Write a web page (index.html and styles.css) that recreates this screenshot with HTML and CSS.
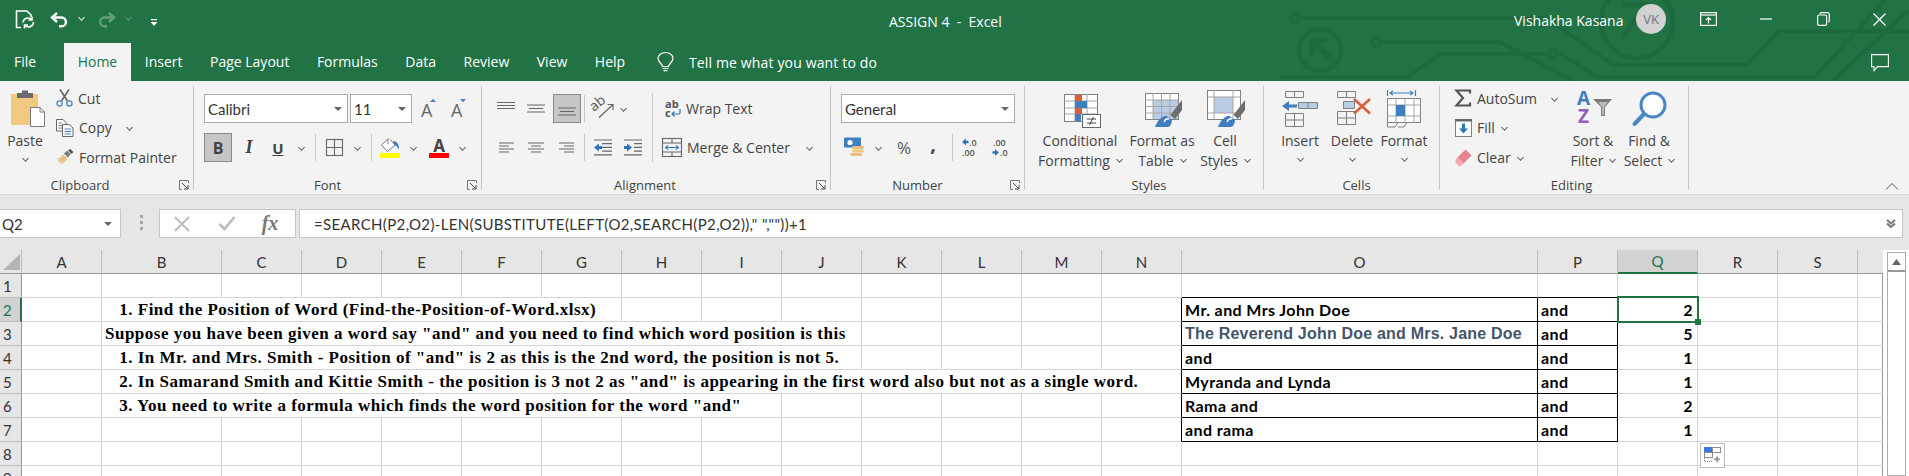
FILE: index.html
```html
<!DOCTYPE html>
<html>
<head lang="en">
    <meta charset="UTF-8">
    <title>ASSIGN 4 - Excel</title>
    <link rel="stylesheet" href="styles.css">
</head>
<body>
<div class="app">

    <header class="titlebar">
        <svg class="circuit" width="629" height="81" viewBox="0 0 629 81" fill="none" stroke="#1d6a3f" stroke-width="4">
            <circle cx="15" cy="18" r="4"/>
            <path d="M19 18H267L333 65H467L499 31H629"/>
            <circle cx="96" cy="42" r="4.5"/>
            <path d="M101 42H220L293 81"/>
            <path d="M0 77H128L160 54H269"/>
            <circle cx="273" cy="54" r="4"/>
            <path d="M277 54H281L317 77H535L605 0"/>
            <path d="M551 82L629 10"/>
            <circle cx="40" cy="50" r="21" stroke-width="5"/>
            <path d="M47 40H32V55M33 41L52 60" stroke-width="5"/>
            <circle cx="357" cy="22" r="36" stroke-width="5"/>
            <path d="M341 5H366L343 37" stroke-width="5"/>
        </svg>

        <div class="top-row">
            <div class="qat">
                <svg class="qat-save" width="20" height="19" viewBox="0 0 20 19" fill="none" stroke="#fff" stroke-width="1.6">
                    <path d="M6 17.5H1.5V1H12L16 5V7"/>
                    <path d="M8 12.5a5 5 0 0 1 8.5-3M18.5 12a5 5 0 0 1-8.5 3.5"/>
                    <path d="M17 6.5V10H13.5M9.5 18.5V15H13"/>
                </svg>
                <svg class="qat-undo" width="19" height="16" viewBox="0 0 19 16" fill="none" stroke="#fff" stroke-width="2.4">
                    <path d="M7 1L2 5.5L7 10"/>
                    <path d="M3 5.5H11.5a4.2 4.2 0 0 1 0 8.8H9"/>
                </svg>
                <span class="chev chev-white qat-chev-a"></span>
                <svg class="qat-redo" width="19" height="16" viewBox="0 0 19 16" fill="none" stroke="#fff" stroke-width="2.4">
                    <path d="M12 1L17 5.5L12 10"/>
                    <path d="M16 5.5H7.5a4.2 4.2 0 0 0 0 8.8H10"/>
                </svg>
                <span class="chev chev-white chev-dim qat-chev-b"></span>
                <svg class="qat-more" width="8" height="8" viewBox="0 0 8 8" fill="#fff">
                    <path d="M1 0H7V1.2H1zM0.5 3H7.5L4 7z"/>
                </svg>
            </div>
            <div class="doc-title">ASSIGN 4&nbsp; -&nbsp; Excel</div>
            <div class="user-name">Vishakha Kasana</div>
            <div class="avatar">VK</div>
            <div class="win-btn">
                <svg width="17" height="14" viewBox="0 0 17 14" fill="none" stroke="#fff" stroke-width="1.2">
                    <rect x="0.6" y="0.6" width="15.8" height="12.8"/>
                    <path d="M0.6 3H16.4"/>
                    <path d="M8.5 11.5V5.5M6 8L8.5 5.5L11 8"/>
                </svg>
            </div>
            <div class="win-btn">
                <svg width="12" height="2" viewBox="0 0 12 2"><path d="M0 1H12" stroke="#fff" stroke-width="1.2"/></svg>
            </div>
            <div class="win-btn">
                <svg width="13" height="14" viewBox="0 0 13 14" fill="none" stroke="#fff" stroke-width="1.2">
                    <rect x="0.6" y="3" width="9" height="10.4" rx="1.5"/>
                    <path d="M3 1.8a1.5 1.5 0 0 1 1.3-1.2h6a1.8 1.8 0 0 1 2 2v6a1.5 1.5 0 0 1-1.2 1.4"/>
                </svg>
            </div>
            <div class="win-btn">
                <svg width="13" height="13" viewBox="0 0 13 13" stroke="#fff" stroke-width="1.3"><path d="M0.5 0.5L12.5 12.5M12.5 0.5L0.5 12.5"/></svg>
            </div>
        </div>

        <nav class="tab-row">
            <div class="tab tab-file">File</div>
            <div class="tab tab-active">Home</div>
            <div class="tab">Insert</div>
            <div class="tab">Page Layout</div>
            <div class="tab">Formulas</div>
            <div class="tab">Data</div>
            <div class="tab">Review</div>
            <div class="tab">View</div>
            <div class="tab">Help</div>
            <svg class="bulb" width="17" height="20" viewBox="0 0 17 20" fill="none" stroke="#fff" stroke-width="1.2">
                <path d="M5.5 14.5C5 11.5 1 10 1 6.5a7.5 6 0 0 1 15 0C16 10 12 11.5 11.5 14.5Z"/>
                <path d="M5.5 16.5H11.5M6.5 18.7H10.5"/>
            </svg>
            <div class="tell-me">Tell me what you want to do</div>
            <svg class="comment" width="18" height="18" viewBox="0 0 18 18" fill="none" stroke="#fff" stroke-width="1.1">
                <path d="M0.6 0.6H17.4V12.6H6.5L3 16.5V12.6H0.6Z"/>
            </svg>
        </nav>
    </header>

    <section class="ribbon">

        <div class="group group-clipboard">
            <div class="group-body clip-body">
                <div class="big-btn big-paste">
                    <svg class="big-icon" width="50" height="42" viewBox="0 0 50 42">
                        <rect x="11" y="8" width="27" height="31" rx="1" fill="#f1c981"/>
                        <path d="M22 7V4.5h6V7h5v5H17V7Z" fill="#6b6b6b"/>
                        <path d="M30.5 21.5H40L44.5 26V40.5H30.5Z" fill="#fff" stroke="#7a7a7a"/>
                        <path d="M40 21.5V26H44.5" fill="none" stroke="#7a7a7a"/>
                    </svg>
                    <div class="big-text">Paste</div>
                    <div class="big-text"><span class="chev chev-up"></span></div>
                </div>
                <div class="small-list">
                    <div class="small-row">
                        <svg class="small-icon" width="17" height="18" viewBox="0 0 17 18" fill="none">
                            <path d="M4 0.5L11.5 12M13 0.5L5.5 12" stroke="#666" stroke-width="1.6"/>
                            <circle cx="3.6" cy="14.4" r="2.6" stroke="#4a86c5" stroke-width="1.3"/>
                            <circle cx="13.4" cy="14.4" r="2.6" stroke="#4a86c5" stroke-width="1.3"/>
                        </svg>
                        <span>Cut</span>
                    </div>
                    <div class="small-row">
                        <svg class="small-icon" width="18" height="18" viewBox="0 0 18 18" fill="#fff" stroke="#666">
                            <path d="M0.5 0.5H7L10 3.5V12H0.5Z"/>
                            <path d="M2.5 4H6M2.5 6.5H8M2.5 9H8" stroke-width="0.9"/>
                            <path d="M6.5 5.5H13L17 9V17.5H6.5Z"/>
                            <path d="M8.5 10H15M8.5 12.5H15M8.5 15H15" stroke="#4a86c5"/>
                        </svg>
                        <span>Copy</span>
                        <span class="chev chev-copy"></span>
                    </div>
                    <div class="small-row">
                        <svg class="small-icon" width="18" height="16" viewBox="0 0 18 16">
                            <path d="M0.5 9.5C4 9.5 6 7.5 7.5 5.5L11.5 9.5C9 13 6 15 3.5 15.5C5 14 5.5 13 5.5 12.5C4 13 3 13 1.5 13C3 12 3 11 3 10.5Z" fill="#e8be82"/>
                            <path d="M8 4.5L11 1.8L14.5 5L12 8.5Z" fill="#777"/>
                            <path d="M12 1.5L14.2 0L17.5 3L15.5 5Z" fill="#555"/>
                        </svg>
                        <span>Format Painter</span>
                    </div>
                </div>
            </div>
            <div class="group-label label-clipboard">Clipboard</div>
            <svg class="launcher" width="10" height="10" viewBox="0 0 10 10" fill="none" stroke="#777">
                <path d="M9.5 3V0.5H0.5V9.5H3"/>
                <path d="M3 3L8.5 8.5M9 5V9H5" stroke="#444"/>
            </svg>
        </div>

        <div class="group group-font">
            <div class="group-body rows">
                <div class="tool-row font-row-a">
                    <div class="combo"><span>Calibri</span><span class="tri"></span></div>
                    <div class="combo combo-size"><span>11</span><span class="tri"></span></div>
                    <svg width="20" height="24" viewBox="0 0 20 24">
                        <text x="3" y="20" class="glyph-a">A</text>
                        <path d="M12 5L15 1.8L18 5Z" fill="#4a86c5"/>
                    </svg>
                    <svg width="20" height="24" viewBox="0 0 20 24">
                        <text x="3" y="20" class="glyph-a">A</text>
                        <path d="M12 2L15 5.2L18 2Z" fill="#4a86c5"/>
                    </svg>
                </div>
                <div class="tool-row font-row-b">
                    <div class="pressed glyph-b">B</div>
                    <div class="glyph-i">I</div>
                    <div class="glyph-u">U</div>
                    <span class="chev"></span>
                    <span class="vline"></span>
                    <svg width="17" height="17" viewBox="0 0 17 17" fill="none" stroke="#666" stroke-width="1.1">
                        <rect x="0.5" y="0.5" width="16" height="16"/>
                        <path d="M8.5 0.5V16.5M0.5 8.5H16.5"/>
                    </svg>
                    <span class="chev"></span>
                    <span class="vline"></span>
                    <svg width="20" height="20" viewBox="0 0 20 20">
                        <path d="M8 0.8L1.5 7L7.5 13.5L15 7L10 1.5" fill="#fff" stroke="#777"/>
                        <path d="M8 0.8V6" stroke="#777" fill="none"/>
                        <path d="M13 3C16 3 18.5 5 19 9.5C19 11 17.5 11 17.5 9.5C17 8 15 7 14 6.5Z" fill="#3f7fbf"/>
                        <rect x="0" y="15" width="20" height="5" fill="#ffff00"/>
                    </svg>
                    <span class="chev"></span>
                    <div class="font-color"><span>A</span></div>
                    <span class="chev"></span>
                </div>
            </div>
            <div class="group-label label-launch">Font</div>
            <svg class="launcher" width="10" height="10" viewBox="0 0 10 10" fill="none" stroke="#777">
                <path d="M9.5 3V0.5H0.5V9.5H3"/>
                <path d="M3 3L8.5 8.5M9 5V9H5" stroke="#444"/>
            </svg>
        </div>

        <div class="group group-align">
            <div class="group-body align-body">
                <div class="rows align-left">
                    <div class="tool-row align-row">
                        <svg width="18" height="18" viewBox="0 0 18 18" stroke="#666" stroke-width="1.2"><path d="M0 3.5H18M0 6.5H18M0 9.5H18" transform="translate(0,-1)"/></svg>
                        <svg width="18" height="18" viewBox="0 0 18 18" stroke="#666" stroke-width="1.2"><path d="M0 5H18M2 8.5H16M0 12H18"/></svg>
                        <div class="pressed">
                            <svg width="18" height="18" viewBox="0 0 18 18" stroke="#666" stroke-width="1.2"><path d="M0 8H18M2 11.5H16M0 15H18"/></svg>
                        </div>
                        <span class="vline"></span>
                        <svg width="21" height="20" viewBox="0 0 21 20" fill="none">
                            <text x="0" y="0" class="glyph-ab" transform="translate(1,13) rotate(-40)">ab</text>
                            <path d="M6 18.5L19.5 6M14.5 5.5H20V11" stroke="#666" stroke-width="1.2"/>
                        </svg>
                        <span class="chev chev-orient"></span>
                    </div>
                    <div class="tool-row align-row">
                        <svg width="15" height="11" viewBox="0 0 15 11" stroke="#666" stroke-width="1.2"><path d="M0 1H15M0 4H10M0 7H15M0 10H10"/></svg>
                        <svg width="16" height="11" viewBox="0 0 16 11" stroke="#666" stroke-width="1.2"><path d="M0 1H16M3 4H13M0 7H16M3 10H13"/></svg>
                        <svg width="15" height="11" viewBox="0 0 15 11" stroke="#666" stroke-width="1.2"><path d="M0 1H15M5 4H15M0 7H15M5 10H15"/></svg>
                        <span class="vline"></span>
                        <svg width="18" height="17" viewBox="0 0 18 17">
                            <path d="M0 1H18M8 4.7H18M8 8.4H18M8 12.1H18M0 15.8H18" stroke="#666" stroke-width="1.2"/>
                            <path d="M0 8.5L5 4.5V7H8V10H5V12.5Z" fill="#2e75b6"/>
                        </svg>
                        <svg width="18" height="17" viewBox="0 0 18 17">
                            <path d="M0 1H18M10 4.7H18M10 8.4H18M10 12.1H18M0 15.8H18" stroke="#666" stroke-width="1.2"/>
                            <path d="M8 8.5L3 4.5V7H0V10H3V12.5Z" fill="#2e75b6"/>
                        </svg>
                    </div>
                </div>
                <span class="vline vline-tall"></span>
                <div class="rows align-right">
                    <div class="tool-row wide-row">
                        <svg class="wrap-icon" width="16" height="18" viewBox="0 0 16 18" fill="none">
                            <text x="0" y="8" class="glyph-tiny">ab</text>
                            <text x="0" y="17" class="glyph-tiny">c</text>
                            <path d="M15 9V12.5A1.5 1.5 0 0 1 13.5 14H7M9.5 11.5L7 14L9.5 16.5" stroke="#2e75b6" stroke-width="1.2"/>
                        </svg>
                        <span>Wrap Text</span>
                    </div>
                    <div class="tool-row wide-row">
                        <svg width="20" height="19" viewBox="0 0 20 19" fill="none" stroke="#666" stroke-width="1.1">
                            <rect x="0.5" y="0.5" width="19" height="18"/>
                            <path d="M0.5 5H19.5M0.5 14H19.5M10 0.5V5M10 14V18.5"/>
                            <path d="M3.5 9.5H16.5M6 7.3L3.5 9.5L6 11.7M14 7.3L16.5 9.5L14 11.7" stroke="#2e75b6"/>
                        </svg>
                        <span>Merge &amp; Center</span>
                        <span class="chev chev-merge"></span>
                    </div>
                </div>
            </div>
            <div class="group-label label-launch">Alignment</div>
            <svg class="launcher" width="10" height="10" viewBox="0 0 10 10" fill="none" stroke="#777">
                <path d="M9.5 3V0.5H0.5V9.5H3"/>
                <path d="M3 3L8.5 8.5M9 5V9H5" stroke="#444"/>
            </svg>
        </div>

        <div class="group group-number">
            <div class="group-body rows">
                <div class="tool-row number-row-a">
                    <div class="combo"><span>General</span><span class="tri"></span></div>
                </div>
                <div class="tool-row number-row-b">
                    <svg width="20" height="21" viewBox="0 0 20 21">
                        <rect x="0" y="0.5" width="17" height="10" rx="1" fill="#3f7fbf"/>
                        <circle cx="6" cy="5.5" r="2.6" fill="#fff"/>
                        <rect x="8" y="9" width="12" height="3" rx="1.4" fill="#e8be82"/>
                        <rect x="8" y="12.5" width="12" height="3" rx="1.4" fill="#f1c981"/>
                        <rect x="6" y="16" width="12" height="3" rx="1.4" fill="#e8be82"/>
                    </svg>
                    <span class="chev"></span>
                    <div class="glyph-pct">%</div>
                    <div class="glyph-comma">,</div>
                    <span class="vline"></span>
                    <svg width="18" height="19" viewBox="0 0 18 19">
                        <path d="M0 4L4 0.5V2.8H6.5V5.2H4V7.5Z" fill="#2e75b6"/>
                        <text x="7" y="8" class="glyph-dec">.0</text>
                        <text x="0" y="18" class="glyph-dec">.00</text>
                    </svg>
                    <svg width="18" height="19" viewBox="0 0 18 19">
                        <text x="1" y="8" class="glyph-dec">.00</text>
                        <path d="M7 14.5L3 11V13.3H0.5V15.7H3V18Z" fill="#2e75b6"/>
                        <text x="8" y="18" class="glyph-dec">.0</text>
                    </svg>
                </div>
            </div>
            <div class="group-label label-launch">Number</div>
            <svg class="launcher" width="10" height="10" viewBox="0 0 10 10" fill="none" stroke="#777">
                <path d="M9.5 3V0.5H0.5V9.5H3"/>
                <path d="M3 3L8.5 8.5M9 5V9H5" stroke="#444"/>
            </svg>
        </div>

        <div class="group group-styles">
            <div class="group-body big-row">
                <div class="big-btn big-cf">
                    <svg class="big-icon" width="40" height="42" viewBox="-4 0 40 42">
                        <rect x="0.5" y="8.5" width="33" height="27" fill="#fff" stroke="#808080"/>
                        <path d="M11 8.5V35.5M23 8.5V35.5M0.5 15H33.5M0.5 22H33.5M0.5 28H33.5" stroke="#a6a6a6" fill="none"/>
                        <rect x="11" y="9" width="7" height="6" fill="#d9603b"/>
                        <rect x="11" y="15" width="12" height="7" fill="#3f7fbf"/>
                        <rect x="11" y="22" width="7" height="6" fill="#d9603b"/>
                        <rect x="11" y="28" width="6" height="7" fill="#3f7fbf"/>
                        <rect x="18.5" y="28.5" width="18" height="13" fill="#fff" stroke="#666"/>
                        <path d="M23 33H32M23 37H32M29.5 31L25.5 39" stroke="#444" fill="none"/>
                    </svg>
                    <div class="big-text">Conditional</div>
                    <div class="big-text">Formatting<span class="chev chev-inline"></span></div>
                </div>
                <div class="big-btn big-fat">
                    <svg class="big-icon" width="40" height="42" viewBox="-3 0 40 42">
                        <rect x="0.5" y="7.5" width="33" height="26" fill="#fff" stroke="#808080"/>
                        <rect x="8" y="14" width="25" height="19" fill="#b8cde4"/>
                        <path d="M8 7.5V33.5M16.5 7.5V33.5M25 7.5V33.5M0.5 14H33.5M0.5 20.5H33.5M0.5 27H33.5" stroke="#a6a6a6" fill="none"/>
                        <path d="M37 14V24L30 33L25.5 29Z" fill="#6d6d6d"/>
                        <path d="M10 41C12 35 17 30 21 29.5L27 34.5C26.5 38 25 41 23 41Z" fill="#3f7fbf"/>
                        <path d="M19 36C20 33.5 22 32.5 24 33" stroke="#fff" stroke-width="1.5" fill="none"/>
                    </svg>
                    <div class="big-text">Format as</div>
                    <div class="big-text">Table<span class="chev chev-inline"></span></div>
                </div>
                <div class="big-btn big-cell">
                    <svg class="big-icon" width="40" height="42" viewBox="-2 0 40 42">
                        <rect x="0.5" y="4.5" width="33" height="29" fill="#fff" stroke="#808080"/>
                        <rect x="7" y="11" width="19" height="16" fill="#b8cde4"/>
                        <path d="M7 4.5V33.5M26 4.5V33.5M0.5 11H33.5M0.5 27H33.5" stroke="#a6a6a6" fill="none"/>
                        <path d="M38 14V24L31 33L26.5 29Z" fill="#6d6d6d"/>
                        <path d="M11 41C13 35 18 30 22 29.5L28 34.5C27.5 38 26 41 24 41Z" fill="#3f7fbf"/>
                        <path d="M20 36C21 33.5 23 32.5 25 33" stroke="#fff" stroke-width="1.5" fill="none"/>
                    </svg>
                    <div class="big-text">Cell</div>
                    <div class="big-text">Styles<span class="chev chev-inline"></span></div>
                </div>
            </div>
            <div class="group-label">Styles</div>
        </div>

        <div class="group group-cells">
            <div class="group-body big-row">
                <div class="big-btn big-cells">
                    <svg class="big-icon" width="40" height="42" viewBox="-2 0 40 42" fill="none" stroke="#808080">
                        <path d="M3.5 5.5H21.5V11.5H3.5ZM12.5 5.5V11.5"/>
                        <path d="M16.5 16.5H35.5V22.5H16.5ZM26 16.5V22.5" fill="#b8cde4"/>
                        <path d="M0 20L7 15V18.5H15V21.5H7V25Z" fill="#3f7fbf" stroke="none"/>
                        <path d="M3.5 27.5H21.5V40.5H3.5ZM3.5 34H21.5M12.5 27.5V40.5"/>
                    </svg>
                    <div class="big-text">Insert</div>
                    <div class="big-text"><span class="chev chev-up"></span></div>
                </div>
                <div class="big-btn big-cells">
                    <svg class="big-icon" width="40" height="42" viewBox="-5 0 40 42" fill="none" stroke="#808080">
                        <path d="M0.5 5.5H18.5V11.5H0.5ZM9.5 5.5V11.5"/>
                        <path d="M6.5 15.5H17.5V22.5H6.5Z" fill="#b8cde4"/>
                        <path d="M0.5 25.5H18.5V38.5H0.5ZM0.5 32H18.5M9.5 25.5V38.5"/>
                        <path d="M17 13L33 27.5M33 13L17 27.5" stroke="#d9603b" stroke-width="2.6"/>
                    </svg>
                    <div class="big-text">Delete</div>
                    <div class="big-text"><span class="chev chev-up"></span></div>
                </div>
                <div class="big-btn big-cells">
                    <svg class="big-icon" width="40" height="42" viewBox="-3 0 40 42" fill="none" stroke="#a6a6a6">
                        <path d="M0.5 4V10M28.5 4V10M3 7H26M6 5L3 7L6 9M23 5L26 7L23 9" stroke="#3f7fbf" stroke-width="1.2"/>
                        <rect x="0.5" y="12.5" width="33" height="24" fill="#fff" stroke="#808080"/>
                        <path d="M9 12.5V36.5M18 12.5V36.5M27 12.5V36.5M0.5 19H33.5M0.5 30H33.5"/>
                        <rect x="9" y="19" width="9" height="11" fill="#3f7fbf" stroke="none"/>
                        <path d="M0.5 36.5V41H8L11 36.5M11 41H17L20 36.5" stroke="#808080"/>
                    </svg>
                    <div class="big-text">Format</div>
                    <div class="big-text"><span class="chev chev-up"></span></div>
                </div>
            </div>
            <div class="group-label">Cells</div>
        </div>

        <div class="group group-editing">
            <div class="group-body big-row">
                <div class="small-list edit-list">
                    <div class="small-row">
                        <svg class="small-icon" width="17" height="18" viewBox="0 0 17 18" fill="none" stroke="#555" stroke-width="2.2">
                            <path d="M15 4.5V1.5H1.5L8 9L1.5 16.5H15V13.5"/>
                        </svg>
                        <span>AutoSum</span>
                        <span class="chev chev-sum"></span>
                    </div>
                    <div class="small-row">
                        <svg class="small-icon" width="17" height="18" viewBox="0 0 17 18">
                            <rect x="0.5" y="0.5" width="16" height="17" fill="#fff" stroke="#808080"/>
                            <rect x="0" y="0" width="17" height="2.5" fill="#666"/>
                            <path d="M7 4.5H10V9.5H13L8.5 14.5L4 9.5H7Z" fill="#2e75b6"/>
                        </svg>
                        <span>Fill</span>
                        <span class="chev chev-near"></span>
                    </div>
                    <div class="small-row">
                        <svg class="small-icon" width="17" height="17" viewBox="0 0 17 17">
                            <path d="M10.5 0.5L16.5 6.5L8.5 14.5L2.5 8.5Z" fill="#e8808f"/>
                            <path d="M2.5 8.5L8.5 14.5L6 17H4L0.5 13.5V10.5Z" fill="#f0a8b2"/>
                        </svg>
                        <span>Clear</span>
                        <span class="chev chev-near"></span>
                    </div>
                </div>
                <div class="big-btn big-sort">
                    <svg class="big-icon" width="40" height="42" viewBox="-4 0 40 42">
                        <text x="0" y="19" class="glyph-sort">A</text>
                        <text x="1" y="37" class="glyph-sort glyph-sort-z">Z</text>
                        <path d="M16 13H35L28 21V30H24V21Z" fill="#777"/>
                        <path d="M25 21V29H27V21L31 16H21Z" fill="#bbb"/>
                    </svg>
                    <div class="big-text">Sort &amp;</div>
                    <div class="big-text">Filter<span class="chev chev-inline"></span></div>
                </div>
                <div class="big-btn big-find">
                    <svg class="big-icon" width="40" height="42" viewBox="-3 0 40 42" fill="none">
                        <circle cx="21" cy="19" r="12" fill="#fff" stroke="#4a86c5" stroke-width="3"/>
                        <path d="M12 28L2.5 38" stroke="#4a86c5" stroke-width="4" stroke-linecap="round"/>
                    </svg>
                    <div class="big-text">Find &amp;</div>
                    <div class="big-text">Select<span class="chev chev-inline"></span></div>
                </div>
            </div>
            <div class="group-label">Editing</div>
        </div>

        <svg class="collapse" width="14" height="8" viewBox="0 0 14 8" fill="none" stroke="#555"><path d="M1 7.5L7 1.5L13 7.5"/></svg>
    </section>

    <section class="formula-bar">
        <div class="name-box"><span>Q2</span><span class="tri"></span></div>
        <svg class="grip" width="4" height="16" viewBox="0 0 4 16" fill="#a6a6a6">
            <rect width="3" height="3"/><rect y="6" width="3" height="3"/><rect y="12" width="3" height="3"/>
        </svg>
        <div class="fx-box">
            <svg width="16" height="16" viewBox="0 0 16 16" stroke="#bdbdbd" stroke-width="2"><path d="M1 1L15 15M15 1L1 15"/></svg>
            <svg width="18" height="15" viewBox="0 0 18 15" fill="none" stroke="#bdbdbd" stroke-width="2.6"><path d="M1.5 8L6.5 13L16.5 1"/></svg>
            <span class="fx-label">fx</span>
        </div>
        <div class="formula-input">
            <span>=SEARCH(P2,O2)-LEN(SUBSTITUTE(LEFT(O2,SEARCH(P2,O2)),"&nbsp;",""))+1</span>
            <svg width="10" height="9" viewBox="0 0 10 9" fill="none" stroke="#777" stroke-width="2"><path d="M1 1L5 4.5L9 1M1 4.5L5 8L9 4.5"/></svg>
        </div>
    </section>

    <section class="sheet">
        <table class="grid">
            <colgroup>
                <col class="col-head"><col class="col-80"><col class="col-120">
                <col class="col-80"><col class="col-80"><col class="col-80"><col class="col-80"><col class="col-80"><col class="col-80">
                <col class="col-80"><col class="col-80"><col class="col-80"><col class="col-80"><col class="col-80"><col class="col-80">
                <col class="col-o"><col class="col-80"><col class="col-80"><col class="col-80"><col class="col-80"><col class="col-t">
            </colgroup>
            <tr class="head-row">
                <th class="corner"><svg width="17" height="16" viewBox="0 0 17 16"><path d="M17 0V16H0Z" fill="#b4b4b4"/></svg></th>
                <th>A</th><th>B</th><th>C</th><th>D</th><th>E</th><th>F</th><th>G</th><th>H</th><th>I</th><th>J</th><th>K</th><th>L</th><th>M</th><th>N</th><th>O</th><th>P</th><th class="head-on">Q</th><th>R</th><th>S</th><th class="head-end"></th>
            </tr>
            <tr>
                <th class="row-num">1</th>
                <td></td><td></td><td></td><td></td><td></td><td></td><td></td><td></td><td></td><td></td><td></td><td></td><td></td><td></td>
                <td class="black-b"></td><td class="black-b"></td><td></td><td></td><td></td><td class="cell-end"></td>
            </tr>
            <tr>
                <th class="row-num row-on">2</th>
                <td></td><td colspan="6" class="serif">   1. Find the Position of Word (Find-the-Position-of-Word.xlsx)</td><td></td><td></td><td></td><td></td><td></td><td></td><td class="black-r"></td>
                <td class="black-b black-r data">Mr. and Mrs John Doe</td><td class="black-b black-r data">and</td><td class="data num selected">2</td><td></td><td></td><td class="cell-end"></td>
            </tr>
            <tr>
                <th class="row-num">3</th>
                <td></td><td colspan="9" class="serif">Suppose you have been given a word say "and" and you need to find which word position is this</td><td></td><td></td><td></td><td class="black-r"></td>
                <td class="black-b black-r data arial">The Reverend John Doe and Mrs. Jane Doe</td><td class="black-b black-r data">and</td><td class="data num">5</td><td></td><td></td><td class="cell-end"></td>
            </tr>
            <tr>
                <th class="row-num">4</th>
                <td></td><td colspan="9" class="serif">   1. In Mr. and Mrs. Smith - Position of "and" is 2 as this is the 2nd word, the position is not 5.</td><td></td><td></td><td></td><td class="black-r"></td>
                <td class="black-b black-r data">and</td><td class="black-b black-r data">and</td><td class="data num">1</td><td></td><td></td><td class="cell-end"></td>
            </tr>
            <tr>
                <th class="row-num">5</th>
                <td></td><td colspan="13" class="serif black-r">   2. In Samarand Smith and Kittie Smith - the position is 3 not 2 as "and" is appearing in the first word also but not as a single word.</td>
                <td class="black-b black-r data">Myranda and Lynda</td><td class="black-b black-r data">and</td><td class="data num">1</td><td></td><td></td><td class="cell-end"></td>
            </tr>
            <tr>
                <th class="row-num">6</th>
                <td></td><td colspan="8" class="serif">   3. You need to write a formula which finds the word position for the word "and"</td><td></td><td></td><td></td><td></td><td class="black-r"></td>
                <td class="black-b black-r data">Rama and</td><td class="black-b black-r data">and</td><td class="data num">2</td><td></td><td></td><td class="cell-end"></td>
            </tr>
            <tr>
                <th class="row-num">7</th>
                <td></td><td></td><td></td><td></td><td></td><td></td><td></td><td></td><td></td><td></td><td></td><td></td><td></td><td class="black-r"></td>
                <td class="black-b black-r data">and rama</td><td class="black-b black-r data">and</td><td class="data num">1</td><td></td><td></td><td class="cell-end"></td>
            </tr>
            <tr>
                <th class="row-num">8</th>
                <td></td><td></td><td></td><td></td><td></td><td></td><td></td><td></td><td></td><td></td><td></td><td></td><td></td><td></td>
                <td></td><td></td><td></td><td></td><td></td><td class="cell-end"></td>
            </tr>
            <tr>
                <th class="row-num">9</th>
                <td></td><td></td><td></td><td></td><td></td><td></td><td></td><td></td><td></td><td></td><td></td><td></td><td></td><td></td>
                <td></td><td></td><td></td><td></td><td></td><td class="cell-end"></td>
            </tr>
        </table>

        <div class="paste-opts">
            <svg width="18" height="18" viewBox="0 0 18 18" fill="none">
                <rect x="0.5" y="0.5" width="8" height="5" fill="#3b78e7" stroke="#3b78e7"/>
                <rect x="8.5" y="0.5" width="8" height="5" stroke="#8c8c8c"/>
                <rect x="0.5" y="5.5" width="8" height="5" stroke="#8c8c8c"/>
                <path d="M0.5 11V14.5H8" stroke="#8c8c8c" stroke-dasharray="1 1"/>
                <path d="M13 9.5V15M10.2 12.2H15.8" stroke="#9a9a9a" stroke-width="2"/>
            </svg>
        </div>

        <div class="scrollbar">
            <div class="scroll-up"><svg width="9" height="6" viewBox="0 0 9 6"><path d="M4.5 0L9 6H0Z" fill="#666"/></svg></div>
            <div class="scroll-track"></div>
        </div>
    </section>

</div>
</body>
</html>
```

FILE: styles.css
```css
* {
    box-sizing: border-box;
    padding: 0;
    margin: 0;
}

body {
    font-family: "Open Sans", "Liberation Sans", sans-serif;
    font-size: 14px;
    color: #444444;
    background: #ffffff;
}

svg {
    display: block;
    flex: none;
    overflow: visible;
}

.app {
    width: 1909px;
    height: 476px;
    overflow: hidden;
    display: flex;
    flex-direction: column;
}

/* title bar */
.titlebar {
    position: relative;
    height: 81px;
    background: #217346;
    color: #ffffff;
}

.circuit {
    position: absolute;
    top: 0;
    right: 0;
    overflow: hidden;
}

.top-row {
    position: relative;
    height: 43px;
    display: grid;
    grid-template-columns: 889px 625px 122px 44px 57px 58px 56px 57px;
    align-items: center;
}

.qat {
    display: flex;
    align-items: center;
    padding-left: 15px;
    height: 43px;
}

.qat-save {
    margin-top: -5px;
}

.qat-undo {
    margin-left: 15px;
    margin-top: -3px;
}

.qat-chev-a {
    margin-left: 10px;
    margin-top: -8px;
}

.qat-redo {
    margin-left: 13px;
    margin-top: -3px;
    opacity: 0.3;
}

.qat-chev-b {
    margin-left: 10px;
    margin-top: -8px;
}

.qat-more {
    margin-left: 19px;
    margin-top: 2px;
}

.doc-title {
    font-size: 14px;
    white-space: nowrap;
}

.user-name {
    font-size: 14px;
    white-space: nowrap;
    margin-top: -3px;
}

.avatar {
    width: 30px;
    height: 30px;
    border-radius: 50%;
    background: #d2d2d2;
    color: #6b7280;
    font-size: 13px;
    text-align: center;
    line-height: 30px;
    margin-top: -5px;
}

.win-btn {
    display: flex;
    justify-content: center;
    margin-top: -5px;
}

.tab-row {
    position: relative;
    height: 38px;
    display: flex;
    align-items: center;
}

.tab {
    height: 38px;
    line-height: 38px;
    padding: 0 13.75px;
    white-space: nowrap;
}

.tab-file {
    padding-left: 14px;
    margin-right: 14px;
}

.tab-active {
    background: #f3f3f3;
    color: #217346;
}

.bulb {
    margin-left: 18px;
    margin-top: -1px;
}

.tell-me {
    margin-left: 15px;
    white-space: nowrap;
    letter-spacing: 0.15px;
}

.comment {
    margin-left: auto;
    margin-right: 20px;
    margin-top: 1px;
}

/* ribbon */
.ribbon {
    position: relative;
    height: 114px;
    background: #f3f3f3;
    border-bottom: 1px solid #d4d4d4;
    display: flex;
    align-items: flex-start;
    flex: none;
}

.group {
    position: relative;
    height: 104px;
    margin-top: 5px;
    border-right: 1px solid #c6c6c6;
    display: flex;
    flex-direction: column;
}

.group-clipboard { width: 194px; }
.group-font { width: 288px; padding-left: 10px; }
.group-align { width: 349px; padding-left: 9px; }
.group-number { width: 194px; padding-left: 10px; }
.group-styles { width: 239px; padding-left: 10px; }
.group-cells { width: 176px; padding-left: 10px; }
.group-editing { width: 249px; padding-left: 15px; }

.group-body {
    height: 94px;
    flex: none;
}

.group-label {
    height: 10px;
    line-height: 10px;
    font-size: 13px;
    text-align: center;
    white-space: nowrap;
}

.label-clipboard {
    padding-right: 33px;
}

.group-font .label-launch { padding-right: 30px; }
.group-align .label-launch { padding-right: 31px; }
.group-number .label-launch { padding-right: 30px; }

.launcher {
    position: absolute;
    right: 4px;
    bottom: 0;
}

.rows {
    display: flex;
    flex-direction: column;
    gap: 10px;
    padding-top: 8px;
}

.tool-row {
    height: 29px;
    display: grid;
    align-items: center;
    justify-items: center;
}

.font-row-a {
    grid-template-columns: 144px 64px 31px 29px;
}

.font-row-b {
    grid-template-columns: 28px 34px 24px 22px 6px 32px 14px 14px 24px 22px 30px 16px;
}

.clip-body {
    display: flex;
}

.big-paste {
    width: 50px;
}

.small-list {
    display: flex;
    flex-direction: column;
    gap: 5.5px;
}

.clip-body .small-list {
    margin-left: 6px;
}

.edit-list {
    width: 113px;
}

.small-row {
    height: 24px;
    display: flex;
    align-items: center;
    white-space: nowrap;
}

.small-icon {
    margin-right: 5px;
}

.big-row {
    display: flex;
}

.big-btn {
    display: flex;
    flex-direction: column;
    align-items: center;
    white-space: nowrap;
}

.big-icon {
    height: 42px;
    margin-bottom: 3px;
}

.big-text {
    height: 20px;
    line-height: 20px;
    display: flex;
    align-items: center;
    justify-content: center;
}

.big-cf { width: 90px; }
.big-fat { width: 74px; }
.big-cell { width: 52px; }
.big-cells { width: 52px; }
.big-sort { width: 50px; }
.big-find { width: 62px; }

.chev {
    display: block;
    width: 5px;
    height: 5px;
    border-right: 1px solid #555555;
    border-bottom: 1px solid #555555;
    transform: rotate(45deg) scale(0.95);
}

.chev-white {
    border-color: #ffffff;
}

.chev-dim {
    opacity: 0.3;
}

.chev-up {
    margin-top: -6px;
}

.chev-inline {
    margin-left: 7px;
    margin-top: -3px;
}

.chev-copy {
    margin-left: 15px;
}

.chev-merge {
    margin-left: 17px;
}

.chev-sum {
    margin-left: 15px;
}

.chev-near {
    margin-left: 7px;
}

.chev-orient {
    justify-self: start;
    margin-left: 1px;
}

.tri {
    width: 0;
    height: 0;
    border-left: 4px solid transparent;
    border-right: 4px solid transparent;
    border-top: 4px solid #666666;
}

.combo {
    width: 100%;
    height: 29px;
    display: flex;
    align-items: center;
    justify-content: space-between;
    background: #ffffff;
    border: 1px solid #ababab;
    padding: 0 5px 0 3px;
    font-family: "Lato", sans-serif;
    font-size: 15px;
    color: #333333;
}

.combo-size {
    width: 62px;
    justify-self: end;
}

.pressed {
    width: 28px;
    height: 29px;
    background: #c6c6c6;
    border: 1px solid #8a8a8a;
    display: flex;
    align-items: center;
    justify-content: center;
}

.glyph-a {
    font-size: 18px;
    font-family: "Open Sans", sans-serif;
    fill: #666666;
}

.glyph-b {
    font-weight: 700;
    font-size: 16px;
}

.glyph-i {
    font-family: "Liberation Serif", serif;
    font-style: italic;
    font-weight: 700;
    font-size: 18px;
}

.glyph-u {
    font-weight: 700;
    font-size: 15px;
    text-decoration: underline;
}

.vline {
    display: block;
    width: 1px;
    height: 27px;
    background: #c6c6c6;
}

.vline-tall {
    height: 69px;
    margin: 7px 9px 0 2px;
}

.font-color {
    width: 20px;
    height: 20px;
    border-bottom: 5px solid #ff0000;
    text-align: center;
    font-weight: 700;
    font-size: 17px;
    line-height: 15px;
}

.align-body {
    display: flex;
}

.align-left {
    width: 159px;
}

.align-row {
    grid-template-columns: 30px 30px 31px 4px 34px 26px;
}

.wide-row {
    display: flex;
    align-items: center;
    white-space: nowrap;
}

.wide-row svg {
    margin-right: 5px;
}

.wrap-icon {
    margin-left: 3px;
}

.glyph-ab {
    font-size: 14px;
    fill: #555555;
}

.glyph-tiny {
    font-size: 11px;
    font-weight: 700;
    fill: #555555;
}

.glyph-dec {
    font-size: 9px;
    font-weight: 600;
    fill: #555555;
}

.number-row-a {
    grid-template-columns: 174px;
}

.number-row-b {
    grid-template-columns: 26px 22px 30px 28px 10px 27px 34px;
}

.glyph-pct {
    font-size: 17px;
    color: #555555;
}

.glyph-comma {
    font-size: 20px;
    font-weight: 700;
    line-height: 20px;
    margin-top: -8px;
}

.glyph-sort {
    font-size: 19px;
    font-weight: 700;
    fill: #3f7fbf;
}

.glyph-sort-z {
    fill: #8d5fb5;
}

.collapse {
    position: absolute;
    right: 10px;
    bottom: 4px;
}

/* formula bar */
.formula-bar {
    height: 55px;
    flex: none;
    background: #e6e6e6;
    padding-top: 14px;
    display: flex;
    align-items: flex-start;
    font-family: "Lato", sans-serif;
    font-size: 15px;
    color: #333333;
}

.name-box {
    width: 121px;
    height: 29px;
    background: #ffffff;
    border: 1px solid #c6c6c6;
    border-left: 0;
    display: flex;
    align-items: center;
    justify-content: space-between;
    padding: 0 8px 0 2px;
}

.grip {
    margin: 6px 0 0 19px;
}

.fx-box {
    width: 137px;
    height: 29px;
    margin-left: 15px;
    background: #ffffff;
    border: 1px solid #c6c6c6;
    display: grid;
    grid-template-columns: 44px 46px 40px;
    align-items: center;
    justify-items: center;
}

.fx-label {
    font-family: "Liberation Serif", serif;
    font-style: italic;
    font-weight: 700;
    font-size: 20px;
    color: #777777;
}

.formula-input {
    width: 1604px;
    height: 29px;
    margin-left: 3px;
    background: #ffffff;
    border: 1px solid #c6c6c6;
    display: flex;
    align-items: center;
    justify-content: space-between;
    padding: 0 6px 0 14px;
    white-space: nowrap;
    letter-spacing: 0.35px;
}

/* sheet */
.sheet {
    position: relative;
    flex: 1;
    overflow: hidden;
    background: #ffffff;
}

.head-row {
    background: #e6e6e6;
}

.grid {
    table-layout: fixed;
    width: 1883px;
    border-collapse: separate;
    border-spacing: 0;
}

.col-head { width: 22px; }
.col-80 { width: 80px; }
.col-120 { width: 120px; }
.col-o { width: 356px; }
.col-t { width: 25px; }

.grid th {
    height: 24px;
    font-family: "Lato", sans-serif;
    font-weight: 400;
    font-size: 15px;
    color: #333333;
    border-right: 1px solid #bdbdbd;
    border-bottom: 1px solid #9a9a9a;
    background: #e6e6e6;
    overflow: hidden;
}

.grid .corner {
    vertical-align: middle;
    padding-left: 3px;
}

.grid .head-on {
    background: #d2d2d2;
    color: #217346;
    border-bottom: 2px solid #217346;
}

.grid .head-end {
    border-right: 0;
}

.grid .row-num {
    height: 24px;
    text-align: left;
    padding-left: 3px;
    border-right: 1px solid #9a9a9a;
    border-bottom: 1px solid #bdbdbd;
}

.grid .row-on {
    background: #d2d2d2;
    color: #217346;
    border-right: 2px solid #217346;
}

.grid td {
    height: 24px;
    line-height: 20px;
    border-right: 1px solid #d4d4d4;
    border-bottom: 1px solid #d4d4d4;
    white-space: pre;
    color: #000000;
}

.grid .cell-end {
    border-right: 1px solid #9a9a9a;
}

.grid .black-b {
    border-bottom: 1px solid #000000;
}

.grid .black-r {
    border-right: 1px solid #000000;
}

.serif {
    font-family: "Liberation Serif", serif;
    font-weight: 700;
    font-size: 17px;
    letter-spacing: 0.5px;
    padding-left: 3px;
}

.data {
    font-family: "Lato", sans-serif;
    font-weight: 700;
    font-size: 16px;
    letter-spacing: 0.4px;
    padding-left: 3px;
}

.grid .arial {
    font-family: "Liberation Sans", sans-serif;
    color: #44546a;
    font-size: 16px;
    letter-spacing: 0.2px;
}

.num {
    text-align: right;
    padding-right: 4px;
    position: relative;
}

.selected::after {
    content: "";
    position: absolute;
    top: -2px;
    left: -1px;
    right: -2px;
    bottom: -2px;
    border: 2px solid #217346;
}

.selected::before {
    content: "";
    position: absolute;
    right: -4px;
    bottom: -4px;
    width: 6px;
    height: 6px;
    background: #217346;
    z-index: 1;
}

.paste-opts {
    position: absolute;
    left: 1700px;
    top: 193px;
    width: 25px;
    height: 25px;
    background: #ffffff;
    border: 1px solid #bdbdbd;
    padding: 3px;
}

.scrollbar {
    position: absolute;
    top: 2px;
    left: 1887px;
    width: 19px;
    bottom: 0;
    display: flex;
    flex-direction: column;
    background: #ffffff;
    border: 1px solid #ababab;
}

.scroll-up {
    height: 19px;
    display: flex;
    align-items: center;
    justify-content: center;
    border-bottom: 2px solid #9a9a9a;
}

.scroll-track {
    flex: 1;
}
```
